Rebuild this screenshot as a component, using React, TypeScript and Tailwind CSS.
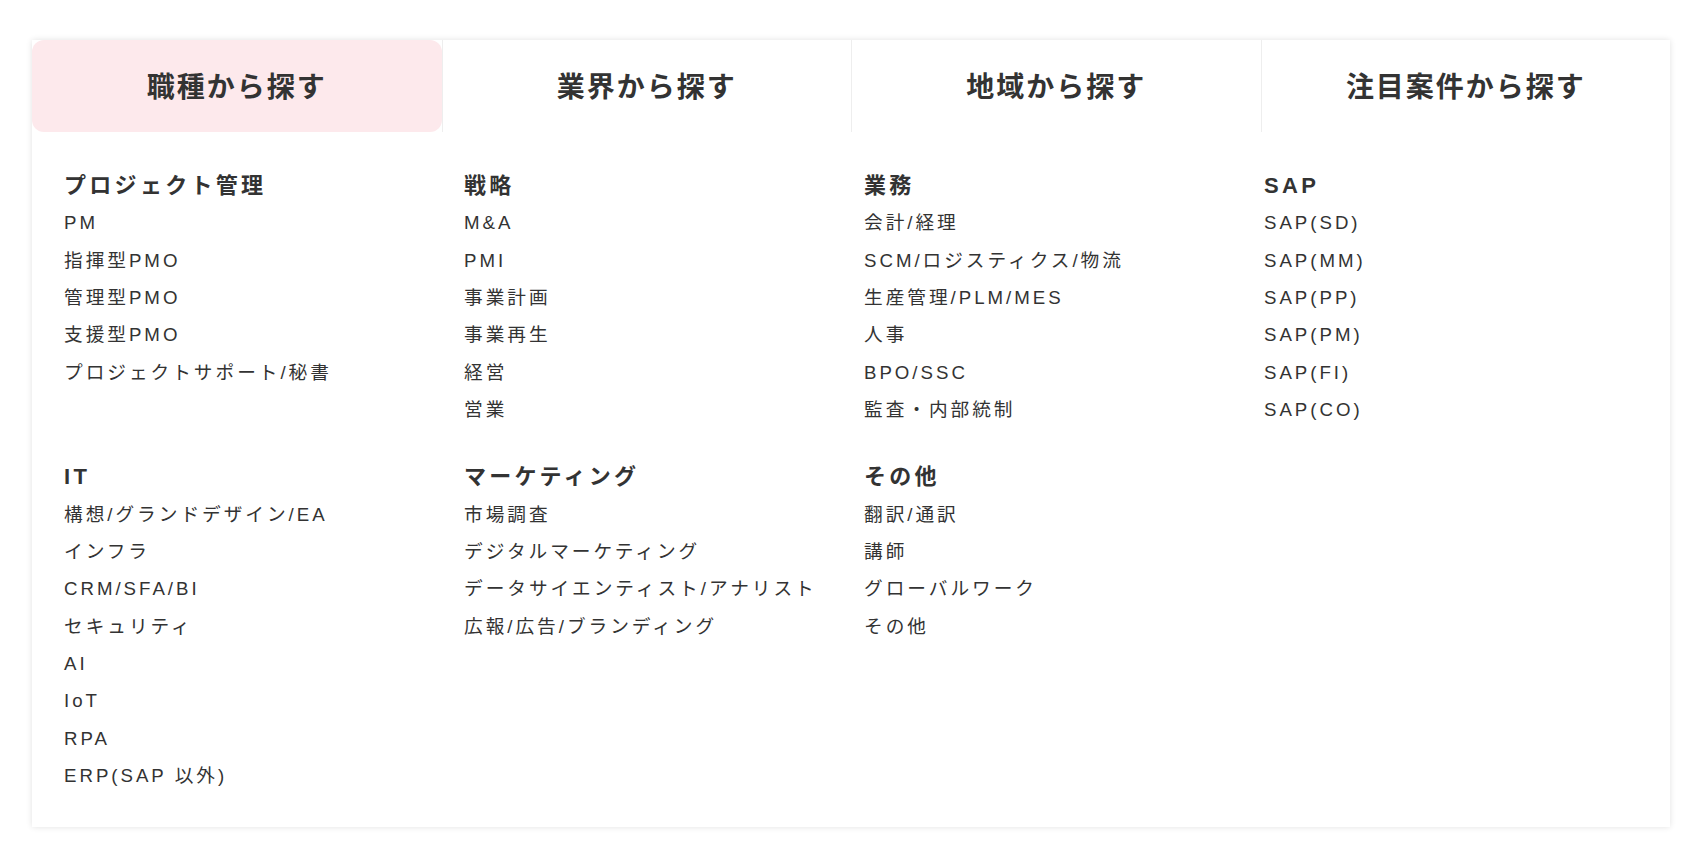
import React from 'react'

type Group = {
  title: string
  items: string[]
}

const tabs = ['職種から探す', '業界から探す', '地域から探す', '注目案件から探す']

// two rows of four columns; empty slots keep the grid aligned
const rows: (Group | null)[][] = [
  [
    { title: 'プロジェクト管理', items: ['PM', '指揮型PMO', '管理型PMO', '支援型PMO', 'プロジェクトサポート/秘書'] },
    { title: '戦略', items: ['M&A', 'PMI', '事業計画', '事業再生', '経営', '営業'] },
    { title: '業務', items: ['会計/経理', 'SCM/ロジスティクス/物流', '生産管理/PLM/MES', '人事', 'BPO/SSC', '監査・内部統制'] },
    { title: 'SAP', items: ['SAP(SD)', 'SAP(MM)', 'SAP(PP)', 'SAP(PM)', 'SAP(FI)', 'SAP(CO)'] },
  ],
  [
    { title: 'IT', items: ['構想/グランドデザイン/EA', 'インフラ', 'CRM/SFA/BI', 'セキュリティ', 'AI', 'IoT', 'RPA', 'ERP(SAP 以外)'] },
    { title: 'マーケティング', items: ['市場調査', 'デジタルマーケティング', 'データサイエンティスト/アナリスト', '広報/広告/ブランディング'] },
    { title: 'その他', items: ['翻訳/通訳', '講師', 'グローバルワーク', 'その他'] },
    null,
  ],
]

function CategoryGroup({ group }: { group: Group | null }) {
  if (!group) return <div />
  return (
    <div className="flex flex-col">
      <h3 className="text-[22px] leading-[37.33px] font-bold tracking-[0.15em] text-[#333]">{group.title}</h3>
      <ul className="flex flex-col">
        {group.items.map((item) => (
          <li key={item} className="text-[18.66px] leading-[37.33px] tracking-[0.16em] text-[#333]">
            {item}
          </li>
        ))}
      </ul>
    </div>
  )
}

export default function App() {
  return (
    <div
      className="min-h-[860px] bg-white pt-[40px] pl-[32px]"
      style={{ fontFamily: '"Liberation Sans", "Noto Sans CJK JP", sans-serif' }}
    >
      <div className="w-[1638px] bg-white shadow-[0_0_6px_rgba(0,0,0,0.12)]">
        {/* Tabs */}
        <div className="grid grid-cols-4 h-[92px]">
          {tabs.map((tab, i) => (
            <button
              key={tab}
              className={
                i === 0
                  ? 'flex items-center justify-center pt-[4px] rounded-[12px] bg-[#fde9ec] text-[28px] font-bold tracking-[0.07em] text-[#333]'
                  : 'flex items-center justify-center pt-[4px] border-l border-[#eeeeee] text-[28px] font-bold tracking-[0.07em] text-[#333]'
              }
            >
              {tab}
            </button>
          ))}
        </div>

        {/* Category lists */}
        <div className="flex flex-col gap-y-[30px] pl-[32px] pt-[35px] pb-[33px]">
          {rows.map((row, r) => (
            <div key={r} className="grid grid-cols-[400px_400px_400px_400px]">
              {row.map((group, c) => (
                <CategoryGroup key={c} group={group} />
              ))}
            </div>
          ))}
        </div>
      </div>
    </div>
  )
}
